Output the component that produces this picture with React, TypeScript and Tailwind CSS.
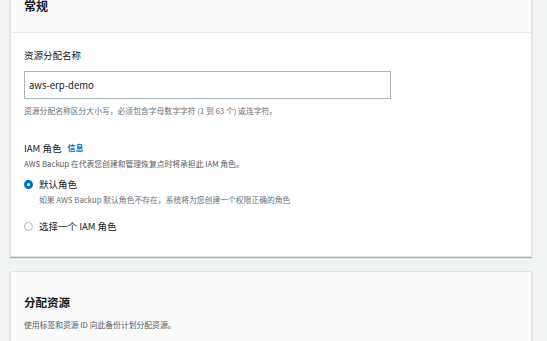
export default function App() {
  return (
    <div className="h-[341px] w-[547px] overflow-hidden bg-[#f2f3f3] font-['Noto_Sans_CJK_SC','Noto_Sans',sans-serif] text-[#16191f]">
      <div className="-mt-[22px] pl-[10px] pr-[15px]">
        <div className="border border-[#e1e4e4] bg-white shadow-[0_1px_1px_rgba(0,28,36,0.3)]">
          <div className="flex h-[54px] items-center border-b border-[#eaeded] bg-[#fafafa] px-[13px]">
            <h2 className="text-[12px] font-bold leading-none">常规</h2>
          </div>
          <div className="px-[13px] pb-[23px] pt-[15px]">
            <div className="text-[9.5px] leading-[14px]">资源分配名称</div>
            <div className="mt-[9px] flex h-[28px] w-[367px] items-center border border-[#aab7b8] px-[4px] text-[9.5px]">
              aws-erp-demo
            </div>
            <div className="mt-[6px] text-[7.8px] leading-[12px] text-[#687078]">
              资源分配名称区分大小写，必须包含字母数字字符 (1 到 63 个) 或连字符。
            </div>
            <div className="mt-[24px] flex items-center gap-[6px]">
              <span className="text-[9.5px] leading-[14px]">IAM 角色</span>
              <span className="text-[8px] font-bold text-[#0073bb]">信息</span>
            </div>
            <div className="mt-[3px] text-[7.8px] leading-[12px] text-[#545b64]">
              AWS Backup 在代表您创建和管理恢复点时将承担此 IAM 角色。
            </div>
            <div className="mt-[7px] flex items-start gap-[6px]">
              <span className="mt-[3px] h-[9px] w-[9px] rounded-full border-[3px] border-[#0073bb] bg-white" />
              <div>
                <div className="text-[9.5px] leading-[14px]">默认角色</div>
                <div className="mt-[3px] text-[7.8px] leading-[12px] text-[#687078]">
                  如果 AWS Backup 默认角色不存在，系统将为您创建一个权限正确的角色
                </div>
              </div>
            </div>
            <div className="mt-[13px] flex items-center gap-[6px]">
              <span className="h-[9px] w-[9px] rounded-full border border-[#aab7b8] bg-white" />
              <span className="text-[9.5px] leading-[14px]">选择一个 IAM 角色</span>
            </div>
          </div>
        </div>
        <div className="mt-[14px] border border-[#e1e4e4] bg-[#fafafa] shadow-[0_1px_1px_rgba(0,28,36,0.3)]">
          <div className="px-[13px] pb-[10px] pt-[22px]">
            <h2 className="text-[11.5px] font-bold leading-[16px]">分配资源</h2>
            <div className="mt-[9px] text-[7.8px] leading-[12px] text-[#545b64]">
              使用标签和资源 ID 向此备份计划分配资源。
            </div>
          </div>
        </div>
      </div>
    </div>
  );
}
